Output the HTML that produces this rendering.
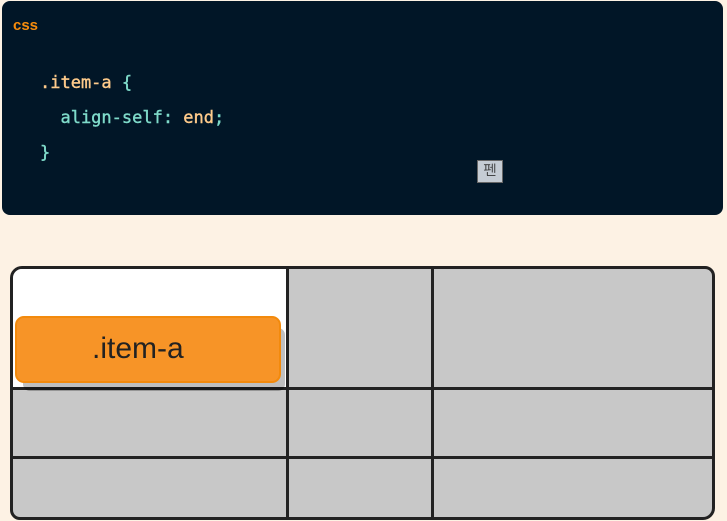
<!DOCTYPE html>
<html><head><style>
body{margin:0;width:727px;height:521px;background:#fdf2e4;position:relative;overflow:hidden;font-family:"Liberation Sans",sans-serif}
.code{position:absolute;left:2px;top:1px;width:721px;height:214px;background:#011627;border-radius:8px}
.lang{position:absolute;left:11px;top:16px;color:#f78c0c;font-weight:bold;font-size:15px}
pre{position:absolute;left:38px;top:65px;margin:0;font-family:"DejaVu Sans Mono","Liberation Mono",monospace;font-size:17px;line-height:35px;color:#7fdbca;-webkit-text-stroke:0.4px currentColor}
.y{color:#ffcb8b}
.btn{position:absolute;left:475px;top:159px;width:26px;height:23px;background:#c5ccd4;border:1px solid #666;box-sizing:border-box;font-family:"NanumGothic","Noto Sans CJK KR",sans-serif;font-size:14px;text-align:center;line-height:21px;color:#333}
.grid{position:absolute;left:10px;top:266px;width:705px;height:254px;background:#c8c8c8;border:3px solid #222;box-sizing:border-box;border-radius:12px 10px 12px 10px;overflow:hidden}
.w{position:absolute;left:0;top:0;width:274px;height:118px;background:#fff}
.v,.h{position:absolute;background:#222}
.item{position:absolute;left:15px;top:316px;width:266px;height:67px;background:#f79427;border:2px solid #f38a0c;box-sizing:border-box;border-radius:9px;font-size:30px;line-height:62px;color:#222;padding-left:75px;box-shadow:6px 10px 0 -2px rgba(0,0,0,.25)}
</style></head><body>
<div class="code"><div class="lang">css</div>
<pre><span class="y">.item-a</span> {
  align-self: <span class="y">end</span>;
}</pre>
<div class="btn">펜</div></div>
<div class="grid"><div class="w"></div>
<div class="v" style="left:273px;top:0;width:3px;height:260px"></div>
<div class="v" style="left:418px;top:0;width:3px;height:260px"></div>
<div class="h" style="left:0;top:118px;width:710px;height:3px"></div>
<div class="h" style="left:0;top:187px;width:710px;height:3px"></div>
</div>
<div class="item">.item-a</div>
</body></html>
